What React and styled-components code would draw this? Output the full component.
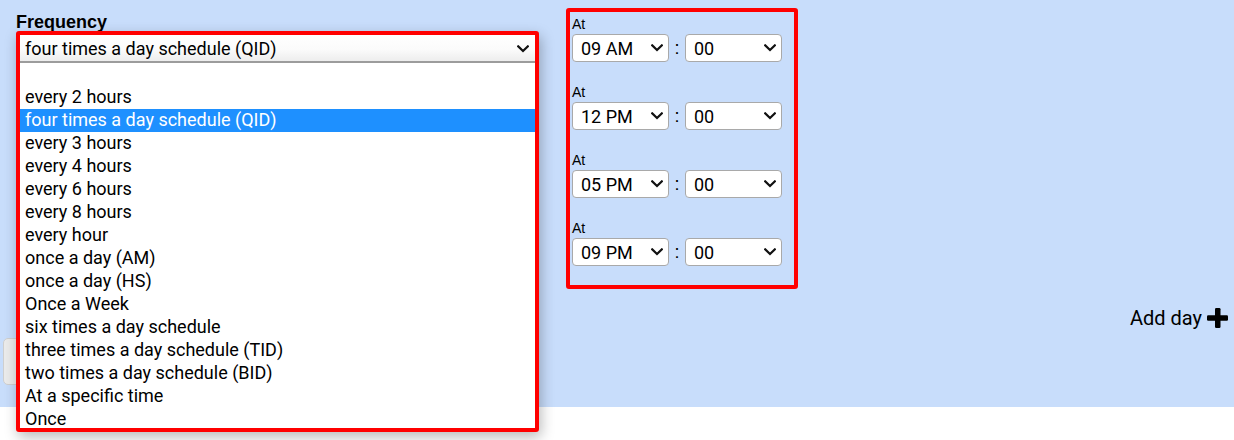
import React from "react";
import styled, { createGlobalStyle } from "styled-components";

const Global = createGlobalStyle`
  html, body { margin: 0; padding: 0; background: #ffffff; }
  body { font-family: "Roboto", "Liberation Sans", sans-serif; color: #000; min-height: 440px; }
  * { box-sizing: border-box; }
`;

const Page = styled.div`
  min-height: 440px;
  display: flex;
  flex-direction: column;
`;

const Section = styled.section`
  height: 407px;
  flex: none;
  background: #c8ddfb;
  padding: 0 6px 0 3px;
  display: flex;
  flex-direction: column;
`;

const Footer = styled.div`
  height: 33px;
  flex: none;
  background: #ffffff;
`;

const TopRow = styled.div`
  display: flex;
  align-items: flex-start;
`;

const FrequencyColumn = styled.div`
  width: 536px;
  padding-left: 13px;
  display: flex;
  flex-direction: column;
`;

const FieldLabel = styled.label`
  display: block;
  margin-top: 13px;
  font-family: "Liberation Sans", Arial, sans-serif;
  font-weight: 700;
  font-size: 18px;
  line-height: 18px;
  height: 18px;
`;

const DropdownAnchor = styled.div`
  position: relative;
  height: 32px;
`;

const DropdownFrame = styled.div`
  position: absolute;
  top: 0;
  left: 0;
  width: 523px;
  height: 401px;
  border: 4px solid #ff0000;
  border-radius: 3px;
  background: #ffffff;
  overflow: hidden;
  z-index: 5;
  box-shadow: 2px 5px 14px rgba(0, 0, 0, 0.28);
  display: flex;
  flex-direction: column;
`;

const SelectButton = styled.div`
  height: 28px;
  flex: none;
  display: flex;
  align-items: center;
  justify-content: space-between;
  padding: 1px 6px 0 5px;
  background: linear-gradient(#ffffff 0%, #fbfbfb 55%, #ededed 100%);
  border-bottom: 2px solid #9c9c9c;
  font-family: "Roboto", sans-serif;
  font-size: 18px;
  line-height: 21px;
`;

const ListBox = styled.ul`
  list-style: none;
  margin: 0;
  padding: 0;
  flex: 1;
`;

const Option = styled.li`
  height: 23px;
  line-height: 21px;
  padding: 0 5px 2px;
  font-family: "Roboto", sans-serif;
  font-size: 18px;
  white-space: nowrap;
  background: ${(p) => (p.$selected ? "#1e90ff" : "transparent")};
  color: ${(p) => (p.$selected ? "#ffffff" : "#000000")};
`;

const TimesPanel = styled.div`
  margin-top: 8px;
  margin-left: 27px;
  width: 232px;
  border: 4px solid #ff0000;
  border-radius: 3px;
  padding: 2px 12px 19px 2px;
  display: flex;
  flex-direction: column;
  gap: 20px;
`;

const TimeBlock = styled.div`
  display: flex;
  flex-direction: column;
`;

const SmallLabel = styled.span`
  font-family: "Liberation Sans", Arial, sans-serif;
  font-size: 14px;
  line-height: 20px;
  height: 20px;
`;

const TimeRow = styled.div`
  display: flex;
  align-items: center;
`;

const TimeSelect = styled.div`
  width: 97px;
  height: 28px;
  border: 1px solid #a9a9a9;
  border-radius: 4px;
  background: #ffffff;
  display: flex;
  align-items: center;
  justify-content: space-between;
  padding: 0 5px 0 8px;
  font-family: "Roboto", sans-serif;
  font-size: 18px;
`;

const Colon = styled.span`
  width: 16px;
  text-align: center;
  font-family: "Liberation Sans", Arial, sans-serif;
  font-size: 18px;
`;

const AddDayRow = styled.div`
  margin-top: 14px;
  display: flex;
  justify-content: flex-end;
  align-items: center;
  gap: 5px;
  font-family: "Roboto", sans-serif;
  font-size: 20px;
  line-height: 30px;
  cursor: pointer;
`;

const ButtonRow = styled.div`
  margin-top: 5px;
  display: flex;
`;

const GreyButton = styled.button`
  width: 110px;
  height: 47px;
  border: 1px solid #cfcfcf;
  border-radius: 5px;
  background: #ebebeb;
`;

const Chevron = () => (
  <svg width="12" height="8" viewBox="0 0 12 8" aria-hidden="true">
    <path d="M1.2 1.4 L6 6 L10.8 1.4" fill="none" stroke="#111" strokeWidth="2.2" strokeLinecap="square" />
  </svg>
);

const PlusIcon = () => (
  <svg width="21" height="20" viewBox="0 0 21 20" aria-hidden="true">
    <rect x="8" y="0" width="5.5" height="20" rx="1.2" fill="#000" />
    <rect x="0" y="7.3" width="21" height="5.5" rx="1.2" fill="#000" />
  </svg>
);

const options = [
  "",
  "every 2 hours",
  "four times a day schedule (QID)",
  "every 3 hours",
  "every 4 hours",
  "every 6 hours",
  "every 8 hours",
  "every hour",
  "once a day (AM)",
  "once a day (HS)",
  "Once a Week",
  "six times a day schedule",
  "three times a day schedule (TID)",
  "two times a day schedule (BID)",
  "At a specific time",
  "Once",
];

const times = ["09 AM", "12 PM", "05 PM", "09 PM"];

export default function App() {
  const selected = "four times a day schedule (QID)";
  return (
    <Page>
      <Global />
      <Section>
        <TopRow>
          <FrequencyColumn>
            <FieldLabel>Frequency</FieldLabel>
            <DropdownAnchor>
              <DropdownFrame>
                <SelectButton>
                  <span>{selected}</span>
                  <Chevron />
                </SelectButton>
                <ListBox role="listbox">
                  {options.map((o, i) => (
                    <Option key={i} $selected={o === selected}>
                      {o || "\u00a0"}
                    </Option>
                  ))}
                </ListBox>
              </DropdownFrame>
            </DropdownAnchor>
          </FrequencyColumn>
          <TimesPanel>
            {times.map((t) => (
              <TimeBlock key={t}>
                <SmallLabel>At</SmallLabel>
                <TimeRow>
                  <TimeSelect>
                    <span>{t}</span>
                    <Chevron />
                  </TimeSelect>
                  <Colon>:</Colon>
                  <TimeSelect>
                    <span>00</span>
                    <Chevron />
                  </TimeSelect>
                </TimeRow>
              </TimeBlock>
            ))}
          </TimesPanel>
        </TopRow>
        <AddDayRow>
          <span>Add day</span>
          <PlusIcon />
        </AddDayRow>
        <ButtonRow>
          <GreyButton aria-label="Save" />
        </ButtonRow>
      </Section>
      <Footer />
    </Page>
  );
}
